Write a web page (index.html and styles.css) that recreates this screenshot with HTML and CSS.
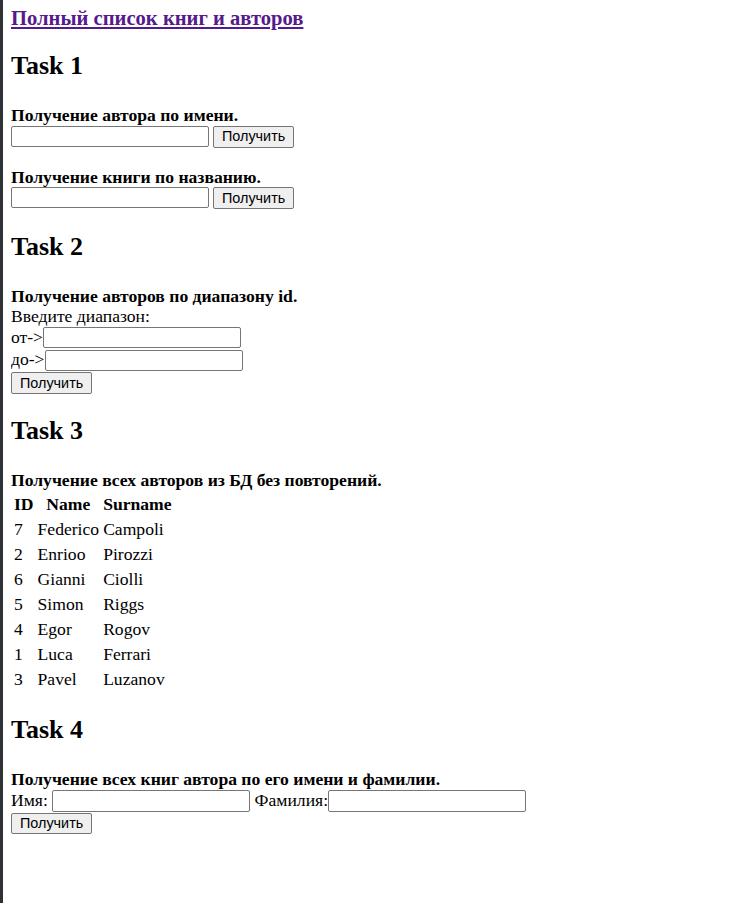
FILE: index.html
```html
<!DOCTYPE html>
<html lang="ru">
<head>
    <meta charset="UTF-8">
    <meta name="viewport" content="width=device-width, initial-scale=1.0">
    <title>Книги и авторы</title>
    <link rel="stylesheet" href="styles.css">
</head>
<body>
    <a class="all-link" href="#">Полный список книг и авторов</a>

    <!-- Task 1 -->
    <h2 class="task-title">Task 1</h2>
    <form class="task">
        <div class="task-label">Получение автора по имени.</div>
        <div class="row">
            <input type="text" name="authorName">
            <button type="button">Получить</button>
        </div>
    </form>
    <form class="task">
        <div class="task-label">Получение книги по названию.</div>
        <div class="row">
            <input type="text" name="bookTitle">
            <button type="button">Получить</button>
        </div>
    </form>

    <!-- Task 2 -->
    <h2 class="task-title">Task 2</h2>
    <form class="task">
        <div class="task-label">Получение авторов по диапазону id.</div>
        <div class="text-line">Введите диапазон:</div>
        <div class="row tight">от-&gt;<input type="text" name="from"></div>
        <div class="row tight">до-&gt;<input type="text" name="to"></div>
        <div class="row tight"><button type="button">Получить</button></div>
    </form>

    <!-- Task 3 -->
    <h2 class="task-title">Task 3</h2>
    <div class="task">
        <div class="task-label">Получение всех авторов из БД без повторений.</div>
        <table class="authors">
            <tr><th>ID</th><th>Name</th><th>Surname</th></tr>
            <tr><td>7</td><td>Federico</td><td>Campoli</td></tr>
            <tr><td>2</td><td>Enrioo</td><td>Pirozzi</td></tr>
            <tr><td>6</td><td>Gianni</td><td>Ciolli</td></tr>
            <tr><td>5</td><td>Simon</td><td>Riggs</td></tr>
            <tr><td>4</td><td>Egor</td><td>Rogov</td></tr>
            <tr><td>1</td><td>Luca</td><td>Ferrari</td></tr>
            <tr><td>3</td><td>Pavel</td><td>Luzanov</td></tr>
        </table>
    </div>

    <!-- Task 4 -->
    <h2 class="task-title">Task 4</h2>
    <form class="task">
        <div class="task-label">Получение всех книг автора по его имени и фамилии.</div>
        <div class="row tight names">
            <span class="spaced">Имя:</span>
            <input class="spaced" type="text" name="firstName">
            <span>Фамилия:</span>
            <input type="text" name="lastName">
        </div>
        <div class="row tight"><button type="button">Получить</button></div>
    </form>
</body>
</html>
```

FILE: styles.css
```css
/* General Styles */
html {
    min-height: 100vh;
    border-left: 3px solid #2e3136;
    background-color: #ffffff;
}
body {
    margin: 0 8px 8px;
    padding-top: 8px;
    font-family: "Liberation Serif", "Times New Roman", serif;
    font-size: 17.6px;
    line-height: 20.5px;
    color: #000000;
}
.all-link {
    display: block;
    font-size: 20.6px;
    line-height: 20.7px;
    font-weight: bold;
    color: #551a8b;
}
.task-title {
    font-size: 26px;
    line-height: 30px;
    margin: 22.5px 0 24px;
}
.task + .task {
    margin-top: 19px;
}
.task-label {
    font-weight: bold;
}
.row {
    display: flex;
    align-items: baseline;
    gap: 4px;
}
.row.tight {
    gap: 0;
    margin-top: 1.2px;
}
.text-line + .row.tight,
.row.names {
    margin-top: 0;
}
.spaced {
    margin-right: 4.4px;
}
input[type="text"] {
    box-sizing: border-box;
    width: 198px;
    height: 21.3px;
    margin: 0;
    padding: 1px 2px;
    border: 1px solid #767676;
    border-radius: 2px;
    font-family: "Liberation Sans", Arial, sans-serif;
    font-size: 14px;
}
input.spaced {
    margin-right: 4.4px;
}
button {
    box-sizing: border-box;
    height: 21.6px;
    margin: 0;
    padding: 1px 8px;
    border: 1px solid #767676;
    border-radius: 2px;
    background-color: #efefef;
    color: #000000;
    font-family: "Liberation Sans", Arial, sans-serif;
    font-size: 14.4px;
    line-height: 17px;
}
.authors {
    border-spacing: 2px;
    line-height: 21px;
}
.authors th,
.authors td {
    padding: 1px;
}
.authors td {
    text-align: left;
}
```
